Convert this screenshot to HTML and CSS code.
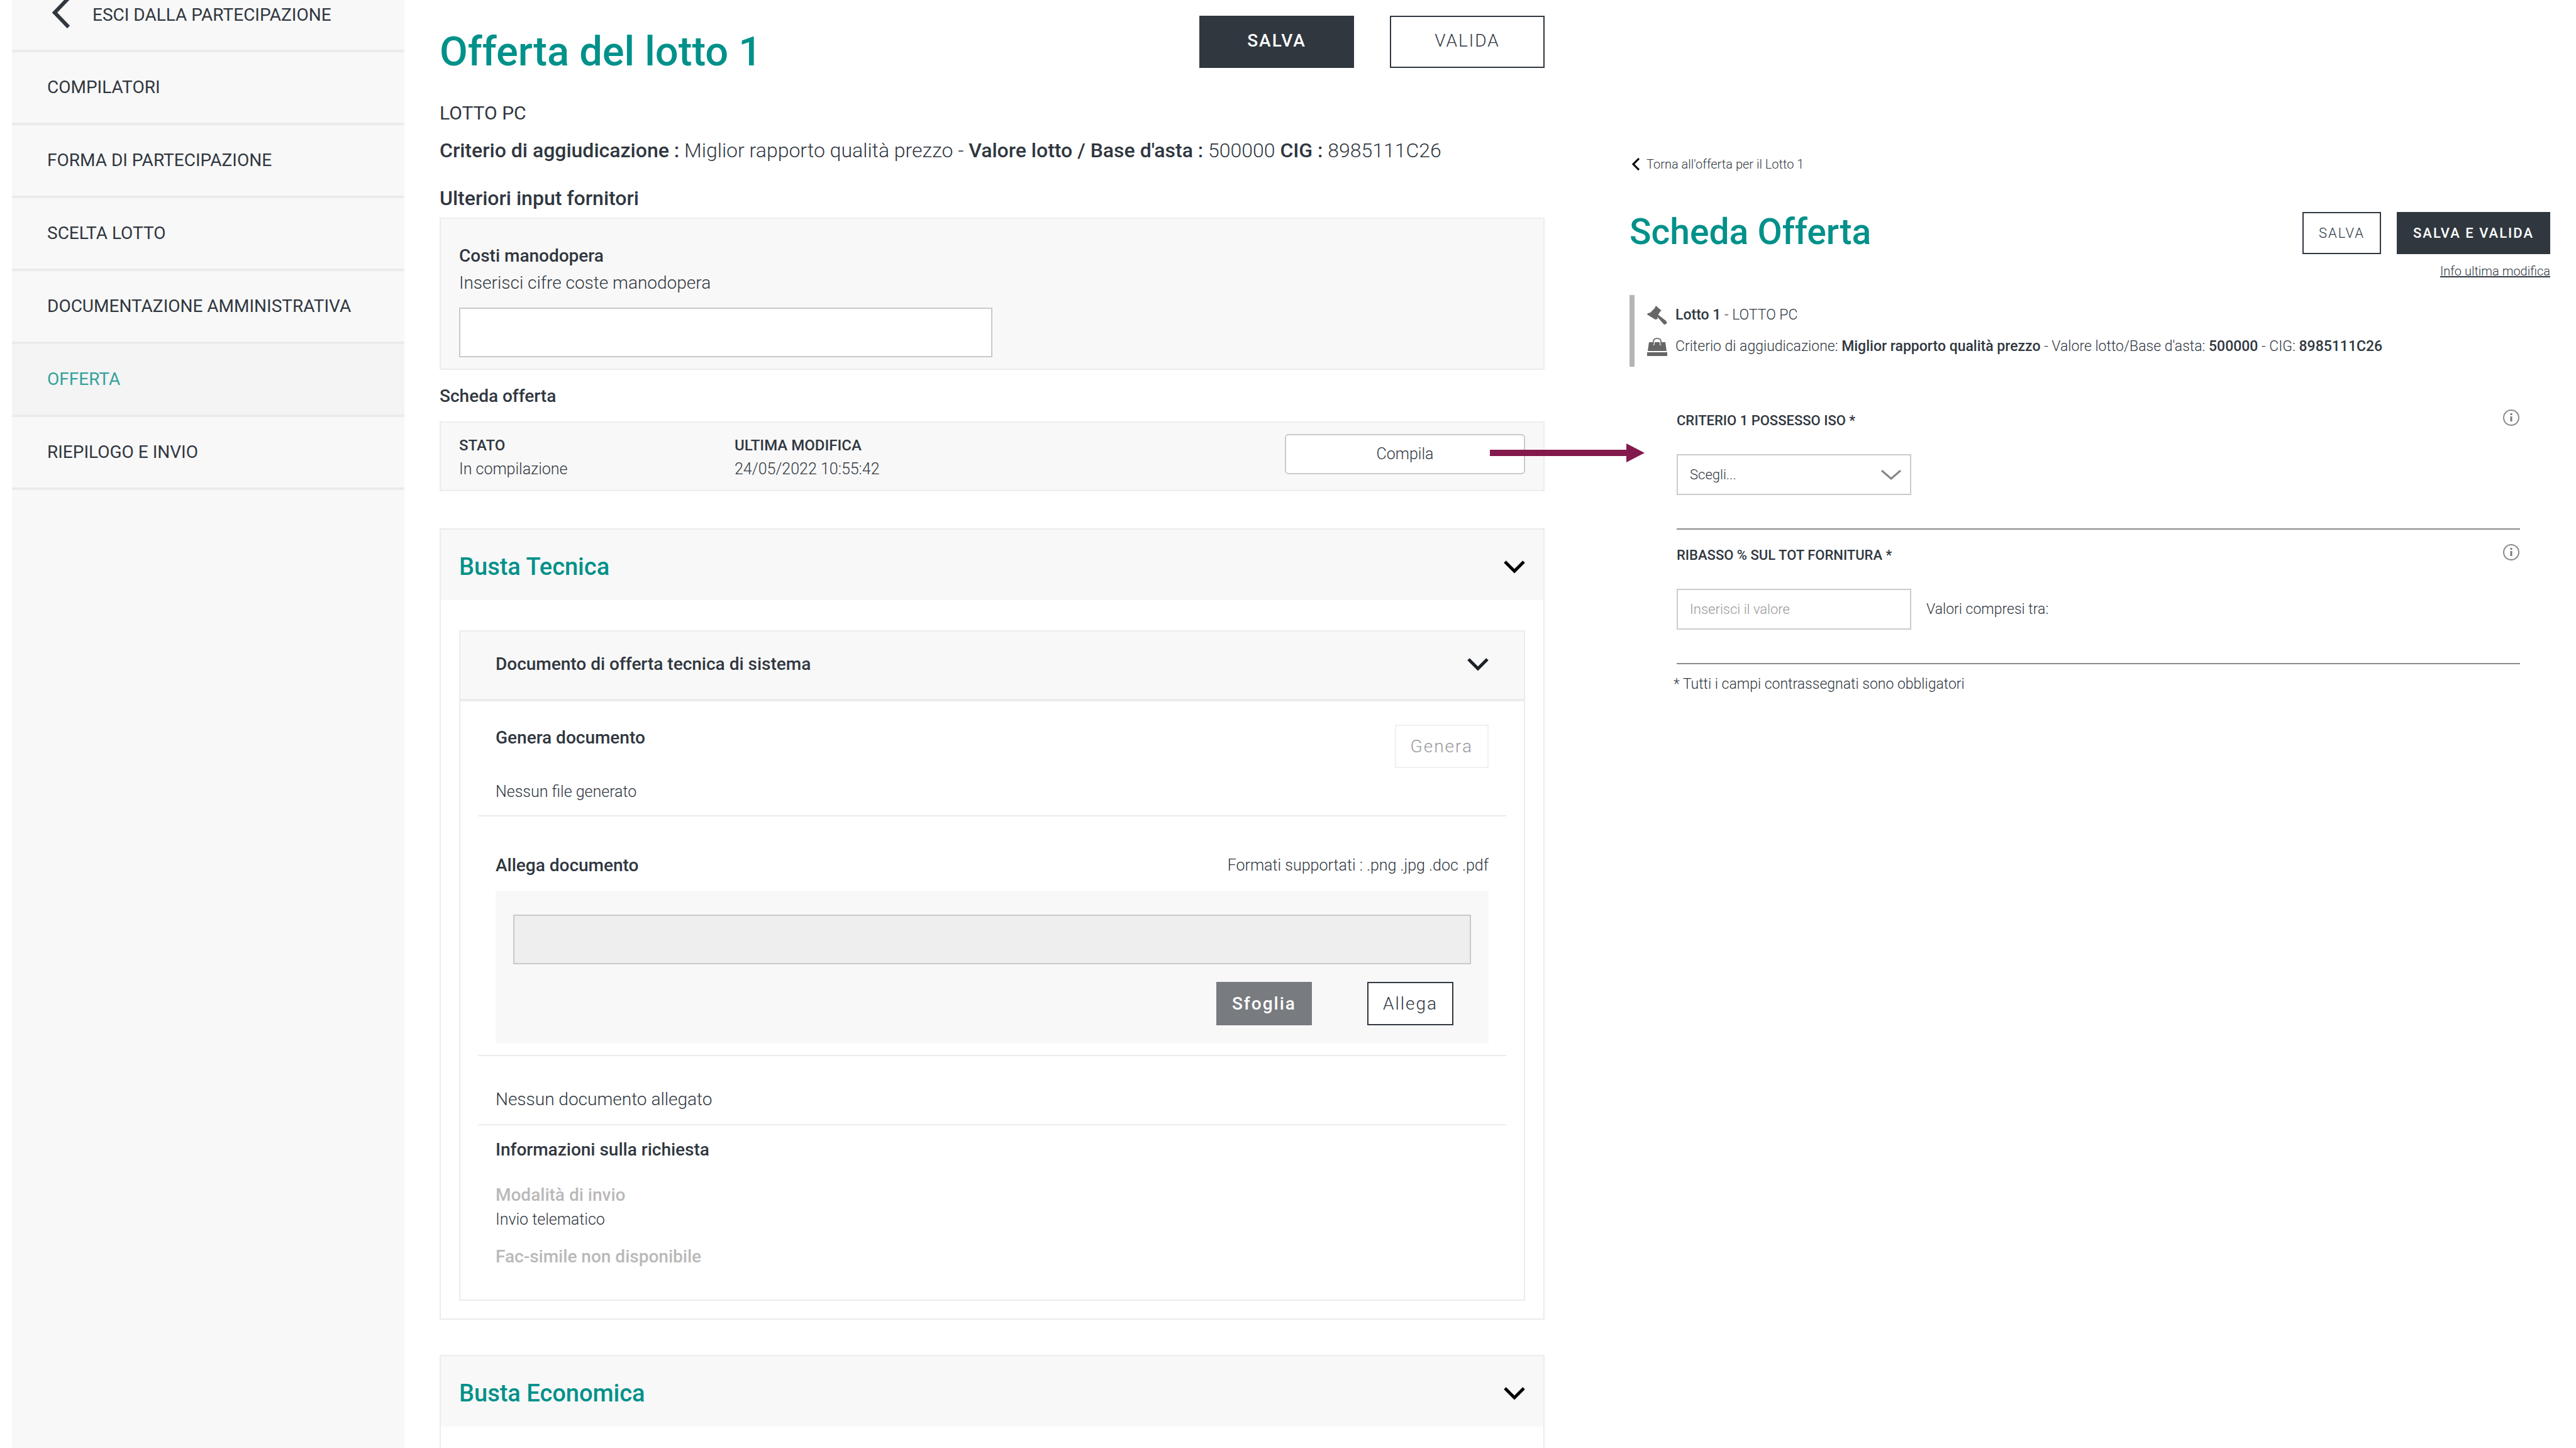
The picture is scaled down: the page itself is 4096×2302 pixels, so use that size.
FILE: index.html
```html
<!DOCTYPE html>
<html lang="it">
<head>
<meta charset="utf-8">
<title>Offerta del lotto 1</title>
<link rel="stylesheet" href="styles.css">
</head>
<body>
<div class="page">
  <nav class="sidebar" aria-label="Partecipazione">
    <a class="nav-item nav-back" href="#">
      <svg class="back-icon" viewBox="0 0 28 50" aria-hidden="true"><path d="M26 2 4 25l22 23" fill="none" stroke="currentColor" stroke-width="6"/></svg>
      ESCI DALLA PARTECIPAZIONE
    </a>
    <a class="nav-item" href="#">COMPILATORI</a>
    <a class="nav-item" href="#">FORMA DI PARTECIPAZIONE</a>
    <a class="nav-item" href="#">SCELTA LOTTO</a>
    <a class="nav-item" href="#">DOCUMENTAZIONE AMMINISTRATIVA</a>
    <a class="nav-item active" href="#" aria-current="page">OFFERTA</a>
    <a class="nav-item" href="#">RIEPILOGO E INVIO</a>
  </nav>

  <main class="offer">
    <header class="offer-head">
      <h1>Offerta del lotto 1</h1>
      <div class="offer-actions">
        <button class="btn btn-dark btn-large" type="button">SALVA</button>
        <button class="btn btn-large" type="button">VALIDA</button>
      </div>
    </header>
    <p class="lot-name">LOTTO PC</p>
    <p class="lot-info"><b>Criterio di aggiudicazione :</b> Miglior rapporto qualità prezzo - <b>Valore lotto / Base d'asta :</b> 500000 <b>CIG :</b> 8985111C26</p>

    <h2 class="section-title">Ulteriori input fornitori</h2>
    <div class="box cost-box">
      <label class="cost-label" for="costi">Costi manodopera</label>
      <p class="cost-hint" id="costi-hint">Inserisci cifre coste manodopera</p>
      <input class="cost-input" id="costi" type="text" aria-describedby="costi-hint">
    </div>

    <h2 class="section-title sheet-title">Scheda offerta</h2>
    <div class="box sheet-box">
      <div><b>STATO</b><p>In compilazione</p></div>
      <div><b>ULTIMA MODIFICA</b><p>24/05/2022 10:55:42</p></div>
      <div class="fill-action">
        <button class="btn-fill" type="button">Compila</button>
        <svg class="arrow" viewBox="0 0 246 30" aria-hidden="true"><path d="M0 10H217V0L246 15 217 30V20H0z" fill="#83194c"/></svg>
      </div>
    </div>

    <section class="envelope">
      <header class="envelope-head">
        <h2>Busta Tecnica</h2>
        <svg class="chevron" viewBox="0 0 34 22" aria-hidden="true"><path d="M2 3 17 18 32 3" fill="none" stroke="#000" stroke-width="5"/></svg>
      </header>
      <div class="envelope-body">
        <article class="doc">
          <header class="doc-head">
            <h3>Documento di offerta tecnica di sistema</h3>
            <svg class="chevron" viewBox="0 0 34 22" aria-hidden="true"><path d="M2 3 17 18 32 3" fill="none" stroke="#1d2228" stroke-width="5"/></svg>
          </header>
          <div class="doc-body">
            <div class="doc-row generate-row">
              <div>
                <h4>Genera documento</h4>
                <p class="small">Nessun file generato</p>
              </div>
              <button class="btn btn-medium" type="button" disabled>Genera</button>
            </div>
            <div class="doc-row attach-row">
              <div class="attach-head">
                <h4><label for="file">Allega documento</label></h4>
                <p class="small">Formati supportati : .png .jpg .doc .pdf</p>
              </div>
              <div class="upload">
                <input class="file-name" id="file" type="text" readonly>
                <div class="upload-actions">
                  <button class="btn btn-grey btn-medium" type="button">Sfoglia</button>
                  <button class="btn btn-medium" type="button">Allega</button>
                </div>
              </div>
            </div>
            <div class="doc-row empty-row"><p>Nessun documento allegato</p></div>
            <div class="doc-row info-row">
              <h4>Informazioni sulla richiesta</h4>
              <p class="muted">Modalità di invio</p>
              <p class="small">Invio telematico</p>
              <p class="muted facsimile">Fac-simile non disponibile</p>
            </div>
          </div>
        </article>
      </div>
    </section>

    <section class="envelope envelope-last">
      <header class="envelope-head">
        <h2>Busta Economica</h2>
        <svg class="chevron" viewBox="0 0 34 22" aria-hidden="true"><path d="M2 3 17 18 32 3" fill="none" stroke="#000" stroke-width="5"/></svg>
      </header>
    </section>
  </main>

  <aside class="sheet">
    <a class="back-link" href="#">
      <svg viewBox="0 0 14 20" aria-hidden="true"><path d="M12 1 3 10l9 9" fill="none" stroke="#000" stroke-width="3"/></svg>
      Torna all'offerta per il Lotto 1
    </a>
    <header class="sheet-head">
      <h1>Scheda Offerta</h1>
      <div class="sheet-actions">
        <button class="btn btn-small" type="button">SALVA</button>
        <button class="btn btn-dark btn-small" type="button">SALVA E VALIDA</button>
      </div>
    </header>
    <a class="last-edit" href="#">Info ultima modifica</a>

    <div class="lot-card">
      <p>
        <svg viewBox="0 0 32 30" aria-hidden="true"><g fill="#666"><path d="M14 0l9 8-2 1-5 8 1 4-4 1L0 14l1-2 4-1 7-7z"/><path d="M16 13l5 4 9 7q2 2 1 4t-4 2l-8-9-5-6z"/></g></svg>
        <span><b>Lotto 1</b> - LOTTO PC</span>
      </p>
      <p>
        <svg viewBox="0 0 32 30" aria-hidden="true"><path d="M10 12V7q0-5 6-5t6 5v5" fill="none" stroke="#777" stroke-width="2"/><path d="M3 8h6v4l1 1 2-1V8h8v4l1 1 2-1V8h6l2 14H1z" fill="#666"/><path d="M0 24h32v6H0z" fill="#666"/></svg>
        <span>Criterio di aggiudicazione: <b>Miglior rapporto qualità prezzo</b> - Valore lotto/Base d'asta: <b>500000</b> - CIG: <b>8985111C26</b></span>
      </p>
    </div>

    <form class="criteria">
      <div class="criterion">
        <div class="criterion-head">
          <label for="iso">CRITERIO 1 POSSESSO ISO *</label>
          <svg viewBox="0 0 28 28" aria-hidden="true"><circle cx="14" cy="14" r="12" fill="none" stroke="#888c90" stroke-width="2"/><path d="M14 7v3M14 12v8" stroke="#777b80" stroke-width="3"/></svg>
        </div>
        <div class="select-wrap">
          <select id="iso"><option>Scegli...</option></select>
          <svg viewBox="0 0 32 16" aria-hidden="true"><path d="M1 1 16 14 31 1" fill="none" stroke="#858585" stroke-width="3"/></svg>
        </div>
      </div>
      <div class="criterion">
        <div class="criterion-head">
          <label for="ribasso">RIBASSO % SUL TOT FORNITURA *</label>
          <svg viewBox="0 0 28 28" aria-hidden="true"><circle cx="14" cy="14" r="12" fill="none" stroke="#888c90" stroke-width="2"/><path d="M14 7v3M14 12v8" stroke="#777b80" stroke-width="3"/></svg>
        </div>
        <div class="value-row">
          <input id="ribasso" type="text" placeholder="Inserisci il valore">
          <span>Valori compresi tra:</span>
        </div>
      </div>
    </form>
    <p class="required-note">* Tutti i campi contrassegnati sono obbligatori</p>
  </aside>
</div>
</body>
</html>
```

FILE: styles.css
```css
* {
  box-sizing: border-box;
}

body {
  margin: 0;
  background: #fff;
  color: #30373f;
  font-family: Roboto, "Liberation Sans", sans-serif;
  font-size: 28px;
  font-weight: 300;
  line-height: 36px;
}

h1, h2, h3, h4, p {
  margin: 0;
}

b, h1, h2, h3, h4 {
  font-weight: 500;
}

a {
  color: inherit;
  text-decoration: none;
}

svg {
  display: block;
  flex: none;
}

button, input, select {
  font: inherit;
  color: inherit;
}

h1 {
  color: #00918a;
}

.page {
  display: grid;
  grid-template-columns: 624px minmax(0, 1813fr) minmax(0, 1599fr);
  min-height: 100vh;
  padding: 0 41px 0 19px;
}

/* Sidebar */
.sidebar {
  background: #f8f8f8;
}

.nav-item {
  display: flex;
  align-items: center;
  height: 116px;
  padding: 0 56px;
  border-bottom: 4px solid #ebebeb;
  font-weight: 400;
}

.nav-back {
  height: 83px;
  gap: 36px;
  padding: 0 64px 32px;
}

.back-icon {
  width: 28px;
  height: 50px;
  margin-top: -8px;
}

.nav-item.active {
  background: #f4f4f4;
  color: #35a19b;
}

/* Buttons */
.btn {
  padding: 0;
  background: #fff;
  border: 2px solid #30373f;
  letter-spacing: 2px;
}

.btn-dark {
  background: #30373f;
  color: #fff;
  font-weight: 500;
}

.btn-grey {
  background: #787b7f;
  border-color: #787b7f;
  color: #fff;
  font-weight: 500;
}

.btn-large {
  width: 246px;
  height: 83px;
  padding-bottom: 4px;
}

.btn-medium {
  height: 69px;
  padding: 0 23px;
}

.btn-small {
  height: 67px;
  padding: 0 24px;
  font-size: 22px;
}

.btn:disabled {
  border-color: #f0f0f0;
  color: #98999d;
}

/* Main column */
.offer {
  display: flex;
  flex-direction: column;
  margin-left: 56px;
  padding-top: 25px;
}

.offer-head {
  display: flex;
  justify-content: space-between;
}

.offer-head h1 {
  margin-top: 21px;
  font-size: 65px;
  line-height: 72px;
}

.offer-actions {
  display: flex;
  gap: 57px;
}

.lot-name {
  margin-top: 44px;
  font-size: 30px;
  font-weight: 400;
}

.lot-info {
  margin-top: 23px;
  font-size: 32px;
}

.section-title {
  margin: 40px 0 13px;
  font-size: 32px;
}

.box {
  background: #f8f8f8;
  border: 2px solid #ececec;
}

.cost-box {
  padding: 41px 29px 18px;
}

.cost-label {
  display: block;
  font-weight: 500;
}

.cost-hint {
  margin-top: 7px;
}

.cost-input {
  display: block;
  width: 50%;
  height: 79px;
  margin-top: 21px;
  padding: 0 20px;
  background: #fff;
  border: 2px solid #c9c9c9;
}

.sheet-title {
  margin: 24px 0 22px;
  font-size: 28px;
}

.sheet-box {
  display: grid;
  grid-template-columns: 438px 1fr 382px;
  padding: 18px 29px 15px;
  font-size: 25px;
}

.sheet-box b {
  font-size: 24px;
}

.sheet-box p {
  margin-top: 2px;
}

.fill-action {
  position: relative;
}

.btn-fill {
  display: block;
  width: 100%;
  height: 64px;
  padding: 0;
  background: #fff;
  border: 2px solid #cacaca;
  border-radius: 6px;
}

.arrow {
  position: absolute;
  top: 15px;
  right: -190px;
  width: 246px;
  height: 30px;
}

.envelope {
  margin-top: 59px;
  border: 2px solid #ececec;
}

.envelope-last {
  flex: 1;
  margin-top: 56px;
  border-bottom: 0;
}

.envelope-head {
  display: flex;
  align-items: center;
  justify-content: space-between;
  padding: 35px 29px 29px;
  background: #f8f8f8;
}

.envelope-head h2 {
  color: #00918a;
  font-size: 38px;
  line-height: 48px;
}

.chevron {
  width: 34px;
  height: 22px;
}

.envelope-body {
  padding: 48px 29px 28px;
}

.doc {
  border: 2px solid #ececec;
}

.doc-head {
  display: flex;
  align-items: center;
  justify-content: space-between;
  padding: 34px 56px 37px;
  background: #f8f8f8;
  border-bottom: 4px solid #ebebeb;
}

.doc h3, .doc h4 {
  font-size: 28px;
}

.doc-body {
  padding: 0 28px;
}

.doc-row {
  padding: 0 28px;
  border-bottom: 2px solid #ececec;
}

.small {
  font-size: 25px;
}

.generate-row {
  display: flex;
  align-items: flex-start;
  justify-content: space-between;
  padding-top: 37px;
  padding-bottom: 19px;
}

.generate-row h4 {
  margin: 3px 0 50px;
}

.attach-row {
  padding-top: 60px;
  padding-bottom: 18px;
}

.attach-head {
  display: flex;
  justify-content: space-between;
}

.upload {
  margin-top: 22px;
  padding: 38px 28px 29px;
  background: #f8f8f8;
}

.file-name {
  display: block;
  width: 100%;
  height: 79px;
  padding: 0 20px;
  background: #eee;
  border: 2px solid #c9c9c9;
}

.upload-actions {
  display: flex;
  justify-content: flex-end;
  gap: 88px;
  margin-top: 28px;
  padding-right: 28px;
}

.empty-row {
  padding-top: 51px;
  padding-bottom: 21px;
}

.info-row {
  padding-top: 21px;
  padding-bottom: 50px;
  border-bottom: 0;
}

.muted {
  margin: 36px 0 3px;
  color: #b9b9b9;
  font-weight: 500;
}

.facsimile {
  margin: 23px 0 0;
}

/* Offer sheet */
.sheet {
  margin-left: 135px;
  padding-top: 247px;
  font-size: 23px;
  line-height: 28px;
}

.back-link {
  display: flex;
  align-items: center;
  gap: 10px;
  padding-left: 3px;
  font-size: 20px;
}

.back-link svg {
  width: 14px;
  height: 20px;
}

.sheet-head {
  display: flex;
  justify-content: space-between;
  margin-top: 62px;
}

.sheet-head h1 {
  font-size: 57px;
  line-height: 64px;
}

.sheet-actions {
  display: flex;
  gap: 25px;
}

.last-edit {
  display: block;
  width: fit-content;
  margin: 13px 0 0 auto;
  font-size: 20px;
  text-decoration: underline;
}

.lot-card {
  margin-top: 24px;
  padding: 18px 0 18px 20px;
  border-left: 8px solid #b5b5b5;
}

.lot-card p {
  display: flex;
  align-items: center;
  gap: 13px;
}

.lot-card p + p {
  margin-top: 22px;
}

.lot-card svg {
  width: 32px;
  height: 30px;
  margin: -1px 0;
}

.criteria {
  margin: 67px 48px 0 75px;
}

.criterion {
  padding-bottom: 53px;
  border-bottom: 2px solid #8a8a8a;
}

.criterion + .criterion {
  padding-top: 22px;
}

.criterion-head {
  display: flex;
  align-items: flex-start;
  justify-content: space-between;
  margin-bottom: 39px;
  font-size: 22px;
  font-weight: 500;
}

.criterion-head label {
  margin-top: 5px;
}

.criterion-head svg {
  width: 28px;
  height: 28px;
}

.select-wrap {
  display: grid;
  align-items: center;
  width: 373px;
}

.select-wrap > * {
  grid-area: 1 / 1;
}

.select-wrap svg {
  justify-self: end;
  width: 32px;
  height: 16px;
  margin-right: 16px;
  pointer-events: none;
}

.select-wrap select, .value-row input {
  width: 373px;
  height: 65px;
  padding: 0 19px;
  appearance: none;
  background: #fff;
  border: 2px solid #cbcbcb;
  border-radius: 0;
  font-size: 22px;
}

.value-row {
  display: flex;
  align-items: center;
  gap: 24px;
}

.value-row input::placeholder {
  color: #999;
  opacity: 1;
}

.required-note {
  margin: 18px 0 0 70px;
}
```
